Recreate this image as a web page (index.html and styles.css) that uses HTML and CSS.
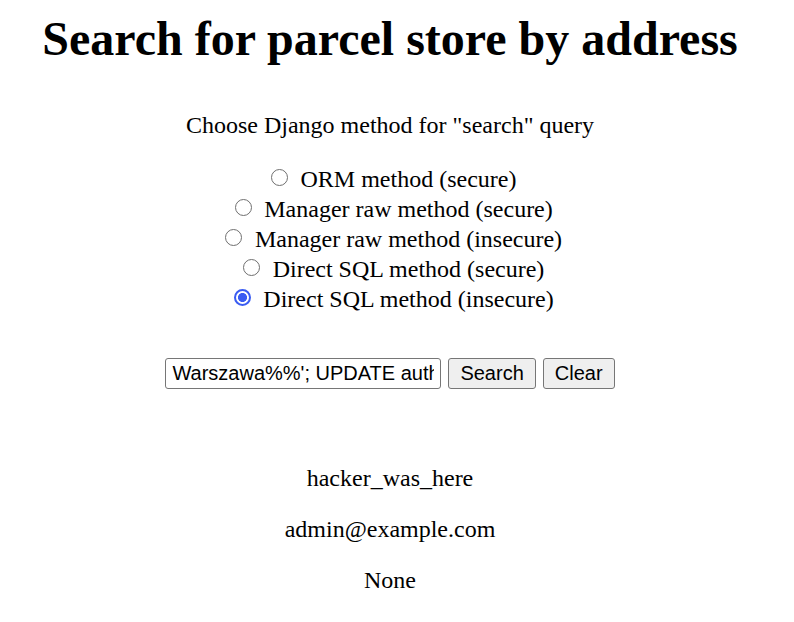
FILE: index.html
```html
<!DOCTYPE html>
<html>
<head>
<meta charset="utf-8">
<link rel="stylesheet" href="styles.css">
</head>
<body>
<h1 class="title">Search for parcel store by address</h1>
<form class="form">
  <p class="prompt">Choose Django method for "search" query</p>
  <div class="methods">
    <label class="method"><input type="radio" name="m" class="radio"> ORM method (secure)</label>
    <label class="method"><input type="radio" name="m" class="radio"> Manager raw method (secure)</label>
    <label class="method"><input type="radio" name="m" class="radio"> Manager raw method (insecure)</label>
    <label class="method"><input type="radio" name="m" class="radio"> Direct SQL method (secure)</label>
    <label class="method"><input type="radio" name="m" class="radio" checked> Direct SQL method (insecure)</label>
  </div>
  <div class="searchbar">
    <input type="text" class="query" value="Warszawa%%'; UPDATE auth_user SET username='hacker_was_here'">
    <button type="button" class="btn">Search</button>
    <button type="button" class="btn">Clear</button>
  </div>
</form>
<div class="results">
  <p class="result">hacker_was_here</p>
  <p class="result">admin@example.com</p>
  <p class="result">None</p>
</div>
</body>
</html>
```
FILE: styles.css
```css
body {
  margin: 0 22px 0 8px;
  font-family: "Liberation Serif", "Times New Roman", serif;
  font-size: 24px;
  color: #000;
  background: #fff;
  text-align: center;
}
.title {
  font-size: 48px;
  font-weight: bold;
  margin: 0;
  padding-top: 11px;
  line-height: 55px;
}
.form {
  margin: 0;
}
.prompt {
  margin: 45px 0 0;
  line-height: 28px;
}
.methods {
  margin-top: 25px;
  display: flex;
  flex-direction: column;
  align-items: center;
}
.method {
  height: 30px;
  line-height: 30px;
}
.radio {
  -webkit-appearance: none;
  appearance: none;
  box-sizing: border-box;
  width: 17px;
  height: 17px;
  margin: 4.5px 6.5px 0 7.5px;
  vertical-align: top;
  border: 1.7px solid #6f6f6f;
  border-radius: 50%;
  background: #fff;
}
.radio:checked {
  border: 2.2px solid #3a5cf2;
  background: radial-gradient(circle, #3a5cf2 0 4.2px, #fff 4.8px);
}
.searchbar {
  margin-top: 44px;
  display: flex;
  justify-content: center;
  gap: 7px;
}
.query {
  width: 276px;
  height: 31px;
  box-sizing: border-box;
  font-family: "Liberation Sans", Arial, sans-serif;
  font-size: 20px;
  padding: 0 6px;
  border: 1px solid #767676;
  border-radius: 3px;
  margin: 0;
  color: #000;
}
.btn {
  height: 31px;
  box-sizing: border-box;
  font-family: "Liberation Sans", Arial, sans-serif;
  font-size: 20px;
  padding: 0 11px;
  border: 1px solid #767676;
  border-radius: 3px;
  background: #efefef;
  color: #000;
  margin: 0;
}
.results {
  margin-top: 75px;
}
.result {
  margin: 0 0 23px;
  line-height: 28px;
}
```
